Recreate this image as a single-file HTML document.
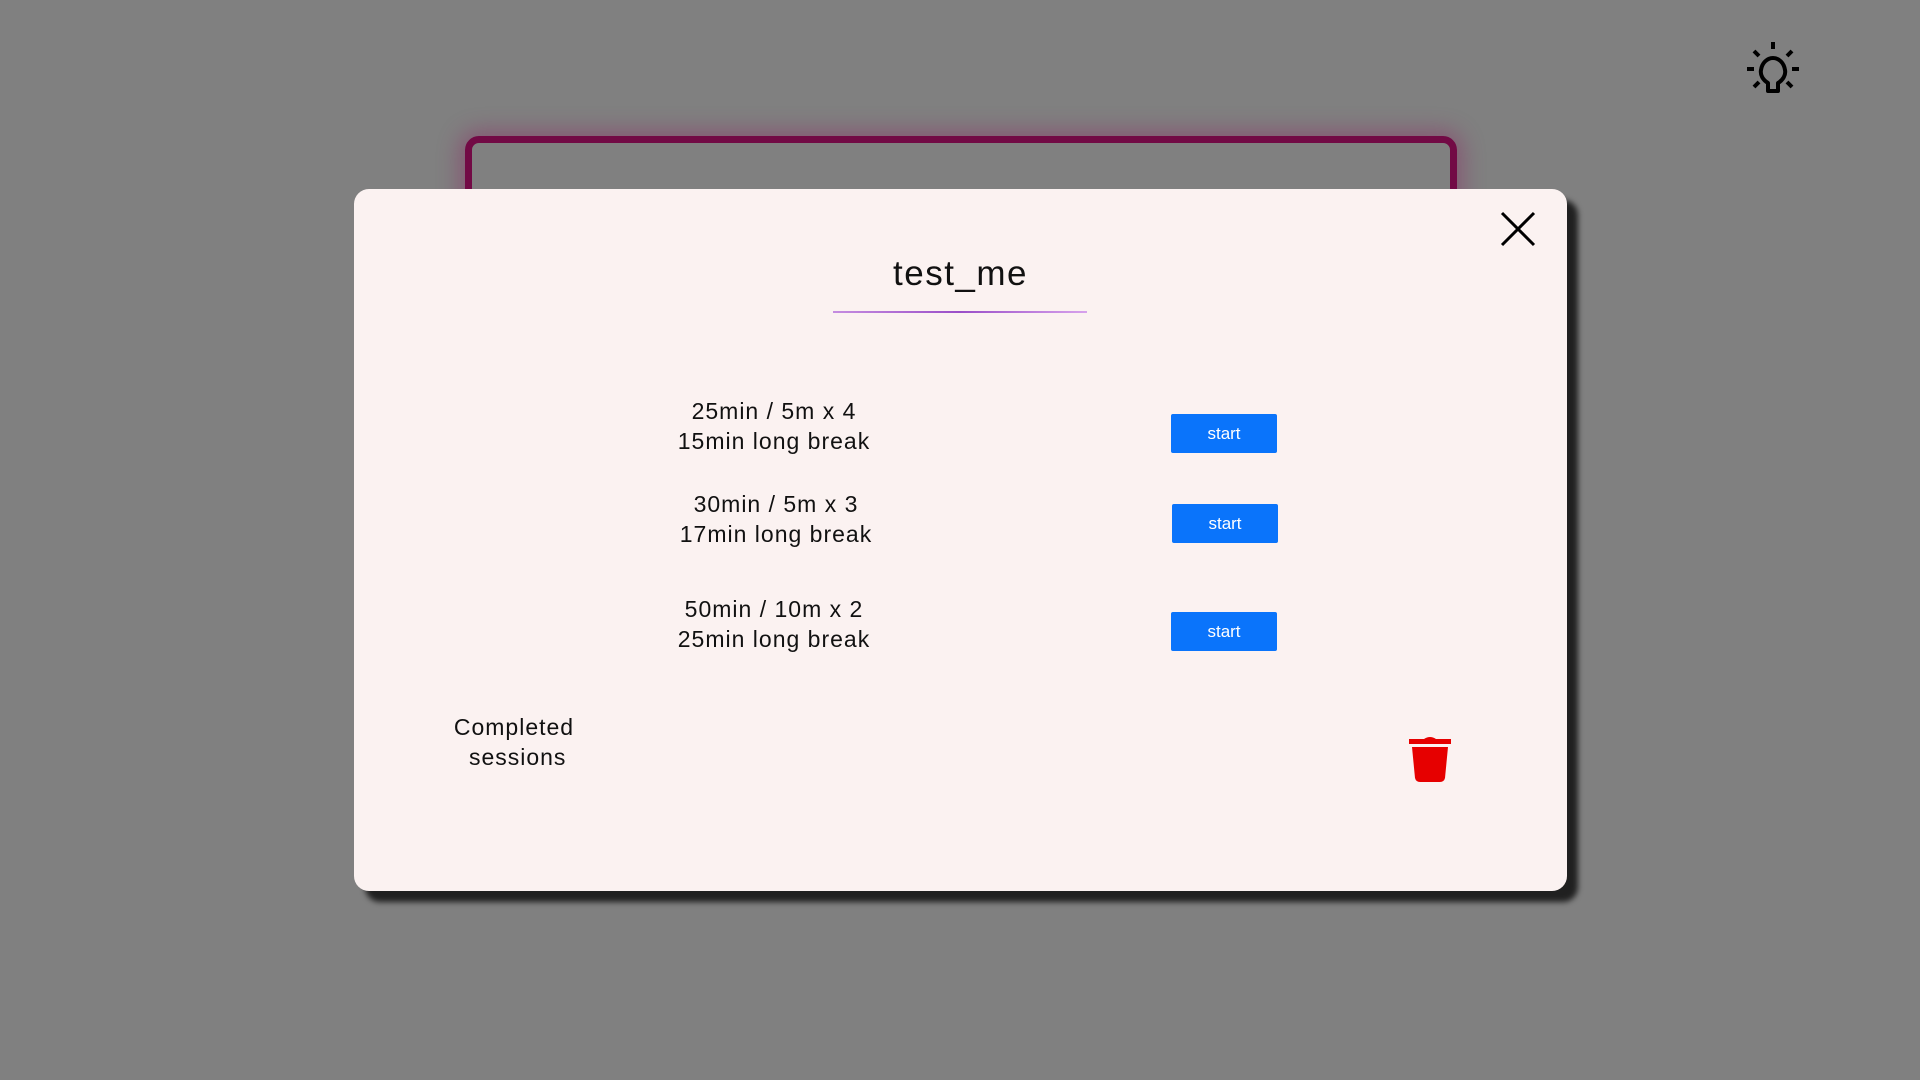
<!DOCTYPE html>
<html><head><style>
html,body{margin:0;padding:0;width:1920px;height:1080px;overflow:hidden;background:#808080;font-family:"Liberation Sans",sans-serif;}
.frame{position:absolute;left:465px;top:136px;width:978px;height:300px;border:7px solid #720a45;border-radius:14px;box-shadow:0 0 22px 6px rgba(140,40,100,.45);}
.modal{position:absolute;left:354px;top:189px;width:1213px;height:702px;background:#fbf2f1;border-radius:15px;box-shadow:11px 11px 6px rgba(0,0,0,.75);}
.t{position:absolute;text-align:center;color:#111;font-size:23px;line-height:30px;letter-spacing:1px;}
.btn{position:absolute;width:106px;height:39px;background:#0a74fb;color:#fff;font-size:17px;line-height:39px;text-align:center;border-radius:2px;}
</style></head><body>
<svg style="position:absolute;left:1744px;top:40px" width="58" height="58" viewBox="0 0 58 58" fill="none" stroke="#000" stroke-width="4">
<path d="M29 2v7M3 29h7M48 29h7M10 11l5 5M48 11l-5 5M10 47l5-5M48 47l-5-5"/>
<path d="M24 51v-8c-5-3-8-8-7-13 1-7 6-12 12-12s11 5 12 12c1 5-2 10-7 13v8z" stroke-linejoin="round"/>
</svg>
<div class="frame"></div>
<div class="modal">
<svg style="position:absolute;left:1146px;top:22px" width="36" height="36" viewBox="0 0 36 36" stroke="#000" stroke-width="3"><path d="M2 2L34 34M34 2L2 34"/></svg>
<div class="t" style="left:0;width:1213px;top:63px;font-size:35px;line-height:44px;letter-spacing:1.5px;">test_me</div>
<div style="position:absolute;left:479px;top:122px;width:254px;height:2px;background:linear-gradient(90deg,#c58de0,#9a4fc8,#d7a2ec);"></div>
<div class="t" style="left:270px;width:300px;top:207px;">25min / 5m x 4<br>15min long break</div>
<div class="btn" style="left:817px;top:225px;">start</div>
<div class="t" style="left:272px;width:300px;top:300px;">30min / 5m x 3<br>17min long break</div>
<div class="btn" style="left:818px;top:315px;">start</div>
<div class="t" style="left:270px;width:300px;top:405px;">50min / 10m x 2<br>25min long break</div>
<div class="btn" style="left:817px;top:423px;">start</div>
<div class="t" style="left:60px;width:200px;top:523px;">Completed<br>&nbsp;sessions</div>
<svg style="position:absolute;left:1055px;top:547px" width="42" height="47" viewBox="0 0 42 47" fill="#e60000"><path d="M15 3q6-4 12 0h15v5H0V3z"/><path d="M3 11h36l-3 31q-1 4-5 4H11q-4 0-5-4z"/></svg>
</div>
</body></html>
